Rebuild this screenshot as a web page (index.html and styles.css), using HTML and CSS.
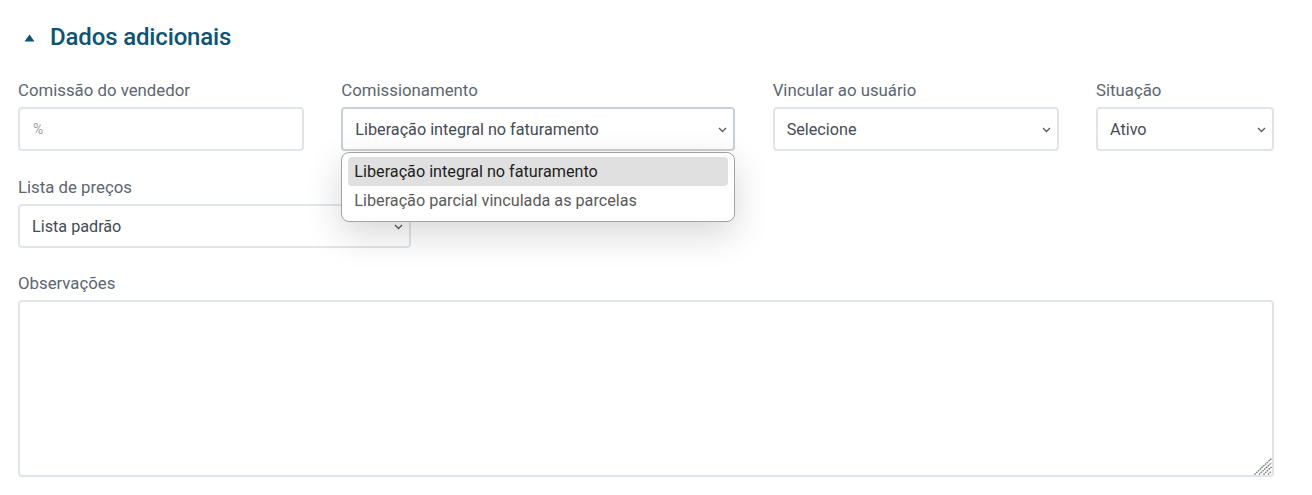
FILE: index.html
```html
<!DOCTYPE html>
<html lang="pt-BR">
<head>
<meta charset="utf-8">
<title>Dados adicionais</title>
<link rel="stylesheet" href="styles.css">
</head>
<body>
<section class="panel">
  <h2 class="section-title">
    <svg class="caret" width="11" height="8" viewBox="0 0 11 8"><polygon points="5.5,0.5 10.5,7.5 0.5,7.5" fill="#0d5474"/></svg>
    <span>Dados adicionais</span>
  </h2>

  <div class="row row-1">
    <div class="field">
      <label class="label">Comissão do vendedor</label>
      <div class="control"><span class="placeholder">%</span></div>
    </div>
    <div class="field field-open">
      <label class="label">Comissionamento</label>
      <div class="control select active">
        <span class="value">Liberação integral no faturamento</span>
        <svg class="chev" width="9" height="6" viewBox="0 0 9 6"><polyline points="1,1 4.5,4.5 8,1" fill="none" stroke="#5a5a5a" stroke-width="1.3"/></svg>
      </div>
      <ul class="menu">
        <li class="menu-item selected">Liberação integral no faturamento</li>
        <li class="menu-item">Liberação parcial vinculada as parcelas</li>
      </ul>
    </div>
    <div class="field">
      <label class="label">Vincular ao usuário</label>
      <div class="control select">
        <span class="value">Selecione</span>
        <svg class="chev" width="9" height="6" viewBox="0 0 9 6"><polyline points="1,1 4.5,4.5 8,1" fill="none" stroke="#5a5a5a" stroke-width="1.3"/></svg>
      </div>
    </div>
    <div class="field">
      <label class="label">Situação</label>
      <div class="control select">
        <span class="value">Ativo</span>
        <svg class="chev" width="9" height="6" viewBox="0 0 9 6"><polyline points="1,1 4.5,4.5 8,1" fill="none" stroke="#5a5a5a" stroke-width="1.3"/></svg>
      </div>
    </div>
  </div>

  <div class="row row-2">
    <div class="field">
      <label class="label">Lista de preços</label>
      <div class="control select">
        <span class="value">Lista padrão</span>
        <svg class="chev" width="9" height="6" viewBox="0 0 9 6"><polyline points="1,1 4.5,4.5 8,1" fill="none" stroke="#5a5a5a" stroke-width="1.3"/></svg>
      </div>
    </div>
  </div>

  <div class="row row-3">
    <div class="field">
      <label class="label">Observações</label>
      <div class="textarea-wrap">
        <textarea class="textarea"></textarea>
        <svg class="grip" width="18" height="17" viewBox="0 0 18 17">
          <g stroke="#6f6f6f" stroke-width="1.3" stroke-dasharray="1.6 0.8">
            <line x1="0.5" y1="16.5" x2="17.5" y2="0.5"/>
            <line x1="5" y1="16.5" x2="17.5" y2="4.7"/>
            <line x1="9.5" y1="16.5" x2="17.5" y2="9"/>
            <line x1="14" y1="16.5" x2="17.5" y2="13.2"/>
          </g>
        </svg>
      </div>
    </div>
  </div>
</section>
</body>
</html>
```

FILE: styles.css
```css
* { box-sizing: border-box; }
html, body { margin: 0; padding: 0; background: #fff; }
body {
  font-family: Roboto, "Liberation Sans", Arial, sans-serif;
  color: #444b53;
  font-size: 16px;
}
.panel {
  padding: 22px 38px 0 18px;
}
.section-title {
  margin: 0;
  display: flex;
  align-items: center;
  gap: 15px;
  height: 30px;
  padding-left: 6px;
  font-size: 24px;
  font-weight: 500;
  color: #0d5474;
  letter-spacing: -0.15px;
}
.caret { margin-top: 1px; }
.row {
  display: grid;
  column-gap: 37.33px;
}
.row-1 {
  margin-top: 26px;
  grid-template-columns: 286px 394px 286px 178px;
}
.row-2 {
  margin-top: 24px;
  grid-template-columns: 393px;
}
.row-3 {
  margin-top: 23px;
  grid-template-columns: 1fr;
}
.field { position: relative; display: flex; flex-direction: column; }
.label {
  display: block;
  line-height: 24px;
  height: 24px;
  margin-bottom: 5px;
  color: #5c6670;
  font-size: 16.8px;
}
.control {
  height: 44px;
  border: 2px solid #e1e5e9;
  border-radius: 4px;
  display: flex;
  align-items: center;
  padding: 0 6px 0 12px;
  background: #fff;
}
.control.active { border-color: #c9d1d7; }
.placeholder { color: #9aa0a6; font-size: 14px; padding-left: 1px; }
.select .value { flex: 1; color: #444b53; white-space: nowrap; font-size: 16.2px; }
.chev { margin-top: 2px; }
.menu {
  position: absolute;
  top: 74px;
  left: 0;
  width: 394px;
  margin: 0;
  padding: 4px 6px 6px 6px;
  list-style: none;
  background: #fff;
  border: 1px solid #a3a3a3;
  border-radius: 8px;
  box-shadow: 0 12px 36px rgba(0,0,0,0.16);
  z-index: 5;
}
.menu-item {
  height: 29px;
  line-height: 29px;
  padding-left: 6px;
  border-radius: 4px;
  color: #5a5a5a;
  font-size: 16.2px;
  white-space: nowrap;
}
.menu-item.selected { background: #e0e0e0; color: #222; }
.textarea-wrap { position: relative; }
.textarea {
  display: block;
  width: 100%;
  height: 177px;
  border: 2px solid #e1e5e9;
  border-radius: 4px;
  resize: none;
  font-family: inherit;
  font-size: 16px;
  margin: 0;
  outline: none;
}
.grip {
  position: absolute;
  right: 2px;
  bottom: 2px;
  pointer-events: none;
}
```
